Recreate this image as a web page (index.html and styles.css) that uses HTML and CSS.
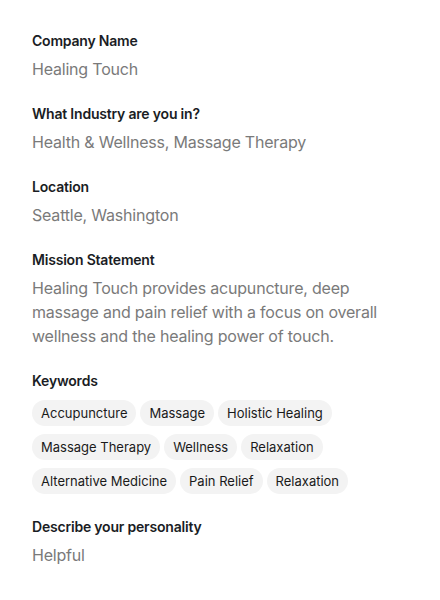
FILE: index.html
```html
<!DOCTYPE html>
<html lang="en">
<head>
<meta charset="utf-8">
<link rel="stylesheet" href="styles.css">
</head>
<body>
<main class="profile">
  <section class="field">
    <h3 class="label">Company Name</h3>
    <p class="value">Healing Touch</p>
  </section>
  <section class="field">
    <h3 class="label">What Industry are you in?</h3>
    <p class="value">Health &amp; Wellness, Massage Therapy</p>
  </section>
  <section class="field">
    <h3 class="label">Location</h3>
    <p class="value">Seattle, Washington</p>
  </section>
  <section class="field">
    <h3 class="label">Mission Statement</h3>
    <p class="value">Healing Touch provides acupuncture, deep massage and pain relief with a focus on overall wellness and the healing power of touch.</p>
  </section>
  <section class="field">
    <h3 class="label">Keywords</h3>
    <ul class="chips">
      <li class="chip">Accupuncture</li>
      <li class="chip">Massage</li>
      <li class="chip">Holistic Healing</li>
      <li class="chip">Massage Therapy</li>
      <li class="chip">Wellness</li>
      <li class="chip">Relaxation</li>
      <li class="chip">Alternative Medicine</li>
      <li class="chip">Pain Relief</li>
      <li class="chip">Relaxation</li>
    </ul>
  </section>
  <section class="field">
    <h3 class="label">Describe your personality</h3>
    <p class="value">Helpful</p>
  </section>
</main>
</body>
</html>
```

FILE: styles.css
```css
* { box-sizing: border-box; }
html, body { margin: 0; padding: 0; background: #ffffff; }
body {
  font-family: Inter, "Noto Sans", sans-serif;
  -webkit-font-smoothing: antialiased;
}
.profile {
  padding: 31px 32px;
  display: flex;
  flex-direction: column;
  gap: 23px;
}
.field {
  display: flex;
  flex-direction: column;
  gap: 6px;
}
.label {
  margin: 0;
  font-size: 14px;
  line-height: 20px;
  font-weight: 600;
  letter-spacing: -0.2px;
  color: #1a1d24;
}
.value {
  margin: 0;
  font-size: 16px;
  line-height: 24px;
  font-weight: 400;
  letter-spacing: -0.2px;
  color: #7a7a7a;
  max-width: 360px;
}
.chips {
  list-style: none;
  margin: 3px 0 0 0;
  padding: 0;
  display: flex;
  flex-wrap: wrap;
  gap: 8px 4px;
}
.chip {
  height: 26px;
  line-height: 26px;
  padding: 0 9px;
  border-radius: 13px;
  background: #f3f3f3;
  font-size: 13px;
  font-weight: 400;
  color: #1a1a1a;
  white-space: nowrap;
}
```
